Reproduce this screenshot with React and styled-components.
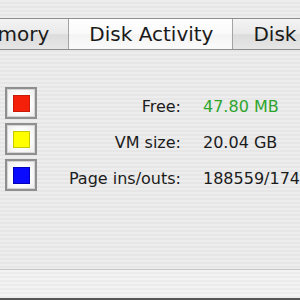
import React from "react";
import styled, { createGlobalStyle } from "styled-components";

const Global = createGlobalStyle`
  html, body { margin: 0; padding: 0; }
  body { width: 300px; height: 300px; overflow: hidden; font-family: "DejaVu Sans", "Liberation Sans", sans-serif; }
`;

const Window = styled.div`
  width: 300px;
  height: 300px;
  overflow: hidden;
  display: flex;
  flex-direction: column;
  background: repeating-linear-gradient(#ededed 0px, #ededed 2px, #e6e6e6 2px, #e6e6e6 4px);
`;

const TopStrip = styled.div`
  height: 18px;
  flex: none;
`;

const TabBar = styled.div`
  height: 30px;
  flex: none;
  display: flex;
  margin-left: -52px;
  border-top: 1px solid #8d8d8d;
  border-bottom: 1px solid #8d8d8d;
`;

const Tab = styled.div`
  flex: none;
  display: flex;
  align-items: center;
  padding: 0 19px 0 20px;
  font-size: 20px;
  color: #1a1a1a;
  white-space: nowrap;
  border-right: 1px solid #a4a4a4;
  background: ${(p) =>
    p.$active
      ? "linear-gradient(#ffffff 0%, #fafafa 50%, #f3f3f3 52%, #fbfbfb 100%)"
      : "linear-gradient(#f4f4f4 0%, #e9e9e9 50%, #dcdcdc 52%, #e6e6e6 100%)"};
`;

const Panel = styled.div`
  flex: 1;
  padding: 37px 0 0 5px;
  display: grid;
  grid-template-columns: 32px 144px auto;
  grid-auto-rows: 32px;
  row-gap: 4px;
  column-gap: 0;
  align-content: start;
`;

const Swatch = styled.div`
  box-sizing: border-box;
  width: 32px;
  height: 32px;
  border: 2px solid #8f8f8f;
  background: radial-gradient(circle, #ffffff 40%, #ececec 100%);
  box-shadow: inset 0 0 0 1px #d6d6d6;
  display: flex;
  align-items: center;
  justify-content: center;
`;

const Chip = styled.div`
  box-sizing: border-box;
  width: 17px;
  height: 17px;
  background: ${(p) => p.$color};
  border: 1px solid ${(p) => p.$edge};
`;

const Label = styled.div`
  font-size: 16px;
  color: #1c1c1c;
  text-align: right;
  padding-top: 10px;
  white-space: nowrap;
`;

const Value = styled.div`
  font-size: 16px;
  color: ${(p) => p.$color || "#1c1c1c"};
  padding: 10px 0 0 22px;
  white-space: nowrap;
`;

const Footer = styled.div`
  height: 28px;
  flex: none;
  border-top: 1px solid #c6c6c6;
  border-bottom: 2px solid #555555;
  background: repeating-linear-gradient(#f3f3f3 0px, #f3f3f3 2px, #ececec 2px, #ececec 4px);
`;

const rows = [
  { color: "#f5200a", edge: "#c81a08", label: "Free:", value: "47.80 MB", vColor: "#2ea52e" },
  { color: "#ffff00", edge: "#c9c900", label: "VM size:", value: "20.04 GB" },
  { color: "#0a0aff", edge: "#0000b8", label: "Page ins/outs:", value: "188559/174291" },
];

export default function App() {
  return (
    <>
      <Global />
      <Window>
        <TopStrip />
        <TabBar>
          <Tab>Memory</Tab>
          <Tab $active>Disk Activity</Tab>
          <Tab>Disk Usage</Tab>
        </TabBar>
        <Panel>
          {rows.map((r) => (
            <React.Fragment key={r.label}>
              <Swatch>
                <Chip $color={r.color} $edge={r.edge} />
              </Swatch>
              <Label>{r.label}</Label>
              <Value $color={r.vColor}>{r.value}</Value>
            </React.Fragment>
          ))}
        </Panel>
        <Footer />
      </Window>
    </>
  );
}
